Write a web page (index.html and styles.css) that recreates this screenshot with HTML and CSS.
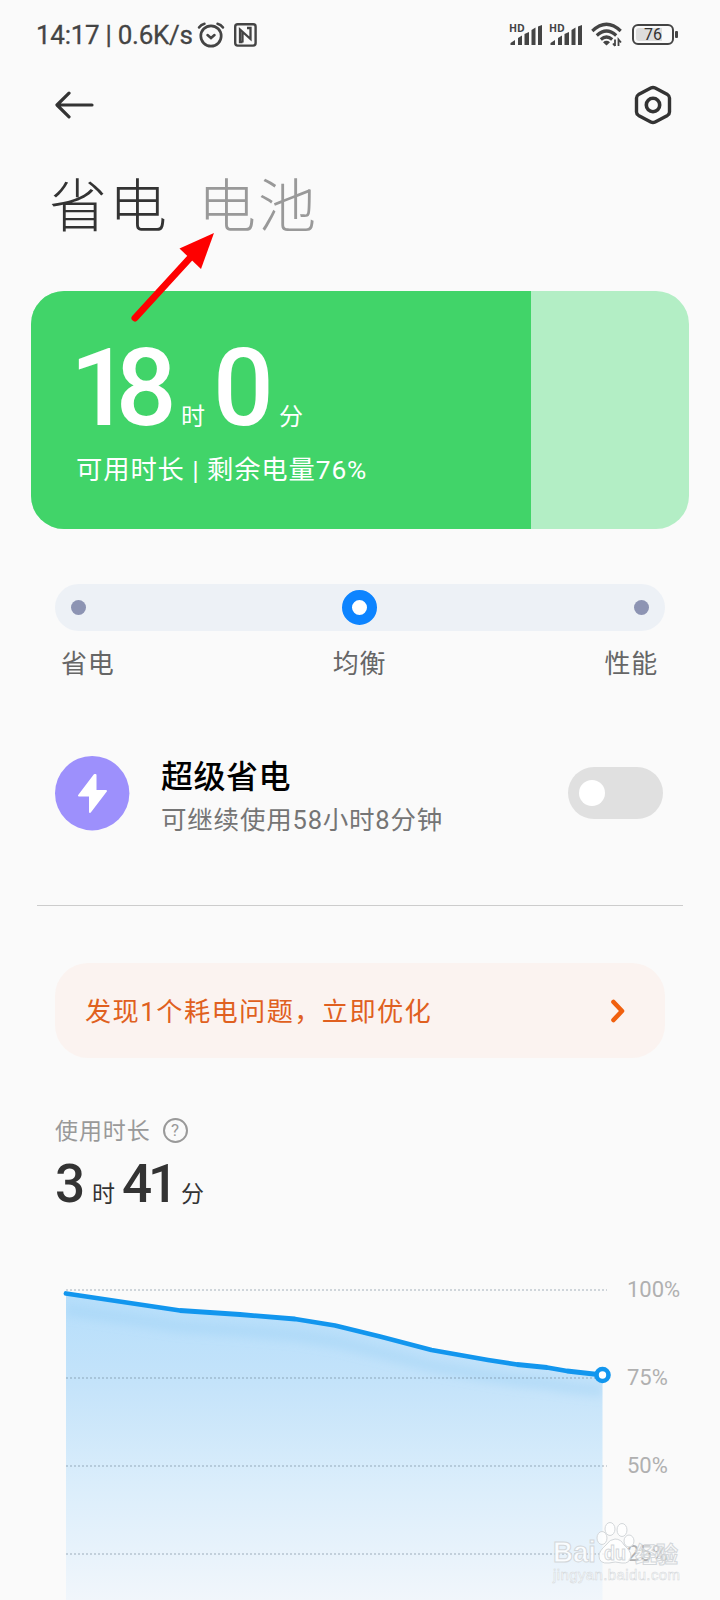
FILE: index.html
```html
<!DOCTYPE html>
<html lang="zh-CN">
<head>
  <meta charset="UTF-8">
  <meta name="viewport" content="width=device-width, initial-scale=1.0">
  <title>省电与电池</title>
  <link rel="stylesheet" href="styles.css">
</head>
<body>
<div class="screen">

  <!-- 状态栏 -->
  <header class="status-bar">
    <div class="status-left">
      <span class="status-time">14:17 | 0.6K/s</span>
      <svg class="icon-alarm" width="28" height="26" viewBox="0 0 28 26" fill="none" stroke="#444" stroke-linecap="round">
        <circle cx="14" cy="14" r="10.2" stroke-width="2.7"/>
        <path d="M10.5 13l3.5 3 3.5-3" stroke-width="2.5"/>
        <path d="M2 5.5Q4 2.500 7.500 1.700M26 5.500Q24 2.500 20.500 1.700" stroke-width="2.500"/>
      </svg>
      <svg class="icon-nfc" width="23" height="24" viewBox="0 0 23 24" fill="none" stroke="#444">
        <rect x="1.200" y="1.200" width="20.400" height="21.400" rx="2.500" stroke-width="2.400"/>
        <path d="M8.500 19H6V6.500L16.500 16V5H13M8.500 19.500V9" stroke-width="2.300"/>
      </svg>
    </div>
    <div class="status-right">
      <svg class="icon-signal" width="34" height="31" viewBox="0 -4 34 31" fill="#444">
        <text class="hd" x="0" y="9.300">HD</text>
        <path d="M1.500 22V20L6 17V22zM9 22V15L13 12.500V22zM15.500 22V11L20 9V22zM22.500 22V7L26.500 4.500V22zM29 22V3.500L33 2V22z"/>
      </svg>
      <svg class="icon-signal" width="34" height="31" viewBox="0 -4 34 31" fill="#444">
        <text class="hd" x="0" y="9.300">HD</text>
        <path d="M1.500 22V20L6 17V22zM9 22V15L13 12.500V22zM15.500 22V11L20 9V22zM22.500 22V7L26.500 4.500V22zM29 22V3.500L33 2V22z"/>
      </svg>
      <svg class="icon-wifi" width="31" height="25" viewBox="0 0 31 25" fill="none" stroke="#444" stroke-width="3.200">
        <path d="M1.300 9Q15.500-4.500 29.700 9M5.800 13.500Q15.500 4.500 25.200 13.500M9.800 17.500Q15.500 12.500 21.200 17.500"/>
        <path d="M12 20.200Q15.500 17.500 19 20.200L15.500 23.500z" fill="#444" stroke="none"/>
        <path d="M24 17.500V24M22 21.500L24 24M27.500 24V17.500L30 20.500" stroke-width="1.800"/>
      </svg>
      <div class="battery"><span class="battery-level">76</span></div>
      <i class="battery-cap"></i>
    </div>
  </header>

  <nav class="toolbar">
    <svg width="40" height="30" viewBox="0 0 40 30" fill="none" stroke="#333" stroke-width="3.200" stroke-linecap="round" stroke-linejoin="round">
      <path d="M37 15H2.500M14 3.200L2 15L14 26.800"/>
    </svg>
    <svg width="38" height="40" viewBox="0 0 38 40" fill="none" stroke="#333" stroke-width="3.400" stroke-linejoin="round">
      <path d="M16.800 3.100Q19 1.900 21.200 3.100L33.500 9.600Q35.500 10.800 35.500 13V27Q35.500 29.200 33.500 30.400L21.200 36.900Q19 38.100 16.800 36.900L4.500 30.400Q2.500 29.200 2.500 27V13Q2.500 10.800 4.500 9.600z"/>
      <circle cx="19" cy="20" r="6.700" stroke-width="3.600"/>
    </svg>
  </nav>

  <div class="tabs">
    <span class="tab tab-active">省电</span>
    <span class="tab">电池</span>
    <svg class="pointer" width="90" height="100" viewBox="0 0 90 100">
      <path d="M10 92L64 33" stroke="#fe0000" stroke-width="7" stroke-linecap="round"/>
      <path d="M89 7L54.500 22.500L76 43z" fill="#fe0000"/>
    </svg>
  </div>

  <!-- 剩余电量 -->
  <section class="power-card">
    <div class="power-fill">
      <div class="power-time"><b>18</b><span>时</span><b>0</b><span>分</span></div>
      <p class="power-note">可用时长 | 剩余电量76%</p>
    </div>
  </section>

  <section class="mode">
    <div class="mode-track"><i></i><i class="mode-thumb"></i><i></i></div>
    <div class="mode-labels"><span>省电</span><span>均衡</span><span>性能</span></div>
  </section>

  <section class="saver">
    <svg width="75" height="75" viewBox="0 0 75 75">
      <circle cx="37.200" cy="37.200" r="37.200" fill="#9d90fc"/>
      <path d="M39.500 19L24 39.500H35V56L51 35H40.500V19z" fill="#fff" stroke="#fff" stroke-width="2" stroke-linejoin="round"/>
    </svg>
    <div class="saver-text">
      <h2>超级省电</h2>
      <p>可继续使用58小时8分钟</p>
    </div>
    <div class="switch"><i></i></div>
  </section>

  <hr class="divider">

  <section class="notice">
    <span>发现1个耗电问题，立即优化</span>
    <svg width="16" height="26" viewBox="0 0 16 26" fill="none" stroke="#f0600f" stroke-width="4.600" stroke-linecap="round" stroke-linejoin="round">
      <path d="M3.500 4L12 13L3.500 22"/>
    </svg>
  </section>

  <section class="usage">
    <div class="usage-title">
      <span>使用时长</span>
      <i class="help">?</i>
    </div>
    <div class="usage-time"><b>3</b><span>时</span><b>41</b><span>分</span></div>
  </section>

  <!-- 电量曲线 -->
  <section class="chart">
    <svg class="plot" width="560" height="330" viewBox="0 0 560 330" fill="none">
      <defs>
        <linearGradient id="area" x1="0" y1="20" x2="0" y2="330" gradientUnits="userSpaceOnUse">
          <stop offset="0" stop-color="#b5defb"/>
          <stop offset="0.300" stop-color="#c4e3fa"/>
          <stop offset="0.650" stop-color="#dceefb"/>
          <stop offset="1" stop-color="#f1f6fb"/>
        </linearGradient>
        <clipPath id="areaClip">
          <path d="M10 23.500L124 40.500L184 44.500L239 49L279 55.500L324 66.500L375.500 80L432 90L461 94.500L491 97.500L511 101L546.500 105V330H10z"/>
        </clipPath>
        <filter id="soft" x="-5%" y="-50%" width="110%" height="200%"><feGaussianBlur stdDeviation="5"/></filter>
      </defs>
      <g clip-path="url(#areaClip)">
        <rect x="10" width="537" height="330" fill="url(#area)"/>
        <path filter="url(#soft)" transform="translate(0 16)" stroke="#97cff3" stroke-opacity="0.350" stroke-width="12" d="M10 23.500L124 40.500L184 44.500L239 49L279 55.500L324 66.500L375.500 80L432 90L461 94.500L491 97.500L511 101L546.500 105"/>
      </g>
      <path d="M10 20H551M10 108H551M10 196H551M10 284H551" stroke="#62788a" stroke-opacity="0.280" stroke-width="1.800" stroke-dasharray="2 2"/>
      <path d="M10 23.500L124 40.500L184 44.500L239 49L279 55.500L324 66.500L375.500 80L432 90L461 94.500L491 97.500L511 101L546.500 105" stroke="#1296ee" stroke-width="4.800" stroke-linecap="round" stroke-linejoin="round"/>
      <circle cx="546.500" cy="105" r="6" fill="#fff" stroke="#1296ee" stroke-width="4.600"/>
    </svg>
    <div class="scale"><span>100%</span><span>75%</span><span>50%</span><span>25%</span></div>
    <svg class="watermark" width="140" height="80" viewBox="0 0 140 80">
      <g fill="#fff" fill-opacity="0.800" stroke="#d3d7da" stroke-width="1">
        <text class="wm-logo" x="10" y="52" textLength="43" lengthAdjust="spacingAndGlyphs">Bai</text>
        <ellipse cx="59" cy="28" rx="5" ry="6.500"/>
        <ellipse cx="67" cy="19" rx="5" ry="6.500"/>
        <ellipse cx="79" cy="20" rx="5" ry="6.500"/>
        <ellipse cx="86" cy="31" rx="5" ry="6"/>
        <path d="M72 29Q78 29 81 35Q88 41 88 46Q87 54 79 53Q72 51 66 53Q56 54 56 46Q56 41 63 35Q67 29 72 29z"/>
        <text class="wm-du" x="61" y="50" textLength="22" lengthAdjust="spacingAndGlyphs">du</text>
        <text class="wm-cjk" x="92" y="52" textLength="43" fill-opacity="0.400">经验</text>
        <text class="wm-url" x="10" y="70" textLength="127" stroke-width="0.500">jingyan.baidu.com</text>
      </g>
    </svg>
  </section>

</div>
</body>
</html>
```
FILE: styles.css
```css
* {
  box-sizing: border-box;
}
body {
  margin: 0;
  background: #fafafa;
  color: #333;
  font-family: Roboto, "Noto Sans CJK SC", sans-serif;
}
h2, p {
  margin: 0;
}
b {
  font-weight: 500;
}
svg {
  display: block;
  flex-shrink: 0;
}
.screen {
  width: 720px;
  height: 1600px;
  overflow: hidden;
}

/* 状态栏 */
.status-bar {
  display: flex;
  justify-content: space-between;
  height: 69px;
  padding: 0 42px 0 36px;
  align-items: center;
}
.status-left, .status-right {
  display: flex;
  align-items: center;
}
.status-time {
  width: 161px;
  font-size: 26px;
  letter-spacing: -0.280px;
  color: #444;
  white-space: nowrap;
  -webkit-text-stroke: 0.300px #444;
}
.icon-nfc {
  margin-left: 9px;
}
.icon-signal {
  margin-right: 6px;
}
.hd {
  font: 700 10.500px "Open Sans", sans-serif;
}
.icon-wifi {
  margin: 0 10px 0 2px;
}
.battery {
  width: 42px;
  height: 21px;
  padding: 2px;
  border: 2px solid #444;
  border-radius: 6px;
}
.battery-level {
  display: block;
  height: 13px;
  font-size: 16px;
  line-height: 14px;
  text-align: center;
  color: #333;
  border-radius: 3px;
  background: linear-gradient(to right, #ddd 76%, transparent 76%);
}
.battery-cap {
  width: 3px;
  height: 7px;
  margin-left: 1px;
  background: #444;
  border-radius: 1px;
}

.toolbar {
  display: flex;
  justify-content: space-between;
  align-items: center;
  height: 72px;
  padding: 0 48px 0 55px;
}

.tabs {
  position: relative;
  display: flex;
  gap: 29px;
  height: 150px;
  padding: 22px 0 0 49px;
}
.tab {
  font-size: 58px;
  font-weight: 200;
  line-height: 88px;
  letter-spacing: 2px;
  color: #999;
}
.tab-active {
  color: #333;
}
/* 红色箭头压在标题和卡片上 */
.pointer {
  position: absolute;
  left: 125px;
  top: 85px;
  z-index: 2;
}

.power-card {
  width: 658px;
  height: 238px;
  margin-left: 31px;
  border-radius: 33px;
  background: #b3eec5;
  overflow: hidden;
}
.power-fill {
  width: 76%;
  height: 100%;
  padding: 43px 0 0 45px;
  background: #41d469;
  color: #fff;
  white-space: nowrap;
}
.power-time {
  display: grid;
  grid-template-columns: 111px 32px 66px auto;
  align-items: baseline;
  height: 115px;
  margin-left: -6px;
  line-height: 110px;
}
.power-time b {
  font-size: 107px;
  letter-spacing: -15px;
}
.power-time span {
  font-size: 24px;
}
.power-note {
  font-size: 26.300px;
  line-height: 42px;
  letter-spacing: 0.900px;
}

.mode {
  margin: 55px 55px 0;
}
.mode-track {
  display: flex;
  justify-content: space-between;
  align-items: center;
  height: 47px;
  padding: 0 16px;
  border-radius: 24px;
  background: #edf1f6;
}
.mode-track i {
  width: 15px;
  height: 15px;
  border-radius: 50%;
  background: #8d94b3;
}
.mode-track .mode-thumb {
  width: 35px;
  height: 35px;
  margin-right: 1px;
  border: 10px solid #0d84ff;
  background: #fff;
}
.mode-labels {
  display: flex;
  justify-content: space-between;
  padding: 13px 7px 0 6px;
  font-size: 26px;
  line-height: 40px;
  letter-spacing: 0.7px;
  color: #666;
}

.saver {
  display: flex;
  align-items: center;
  height: 75px;
  margin: 72px 57px 0 55px;
}
.saver-text {
  flex: 1;
  padding: 10px 0 0 31px;
}
.saver-text h2 {
  font-size: 32px;
  font-weight: 500;
  line-height: 42px;
  letter-spacing: 0.500px;
  color: #000;
}
.saver-text p {
  font-size: 25.500px;
  line-height: 44px;
  letter-spacing: 0.800px;
  color: #757575;
}
.switch {
  display: flex;
  align-items: center;
  width: 95px;
  height: 52px;
  margin-bottom: 1px;
  padding-left: 11px;
  border-radius: 26px;
  background: #e0e0e0;
}
.switch i {
  width: 26px;
  height: 26px;
  border-radius: 50%;
  background: #fff;
}

.divider {
  height: 1px;
  margin: 74px 37px 0;
  border: 0;
  background: #ccc;
}

.notice {
  display: flex;
  justify-content: space-between;
  align-items: center;
  height: 95px;
  margin: 57px 55px 0;
  padding: 0 39px 0 30px;
  border-radius: 33px;
  background: #fbf3f0;
  color: #e06020;
  font-size: 26.200px;
  letter-spacing: 1.400px;
}
.notice span {
  padding-bottom: 2px;
}

.usage {
  height: 202px;
  padding: 55px 0 0 55px;
}
.usage-title {
  display: flex;
  align-items: center;
  gap: 12px;
  height: 34px;
  font-size: 23px;
  line-height: 30px;
  letter-spacing: 0.900px;
  color: #999;
}
.usage-title span {
  padding-top: 3px;
}
.help {
  width: 25px;
  height: 25px;
  border: 2px solid #999;
  border-radius: 50%;
  font-size: 17px;
  font-style: normal;
  line-height: 21px;
  letter-spacing: 0;
  text-align: center;
}
.usage-time {
  display: grid;
  grid-template-columns: 37px 30px 59px auto;
  align-items: baseline;
  padding-top: 2px;
  line-height: 70px;
}
.usage-time b {
  font-size: 53px;
  letter-spacing: -4px;
}
.usage-time span {
  font-size: 23px;
}

.chart {
  position: relative;
  display: flex;
  height: 340px;
  padding: 10px 0 0 56px;
}
.scale {
  padding-left: 11px;
  font-size: 22px;
  color: #b0b0b0;
}
.scale span {
  display: block;
  height: 88px;
  line-height: 40px;
}
.watermark {
  position: absolute;
  left: 543px;
  top: 250px;
}
.wm-logo {
  font: 700 29px "Liberation Sans", sans-serif;
}
.wm-du {
  font: 700 20px "Liberation Sans", sans-serif;
}
.wm-cjk {
  font: 700 22px "Noto Sans CJK SC", sans-serif;
}
.wm-url {
  font: 15px "Liberation Sans", sans-serif;
}
```
